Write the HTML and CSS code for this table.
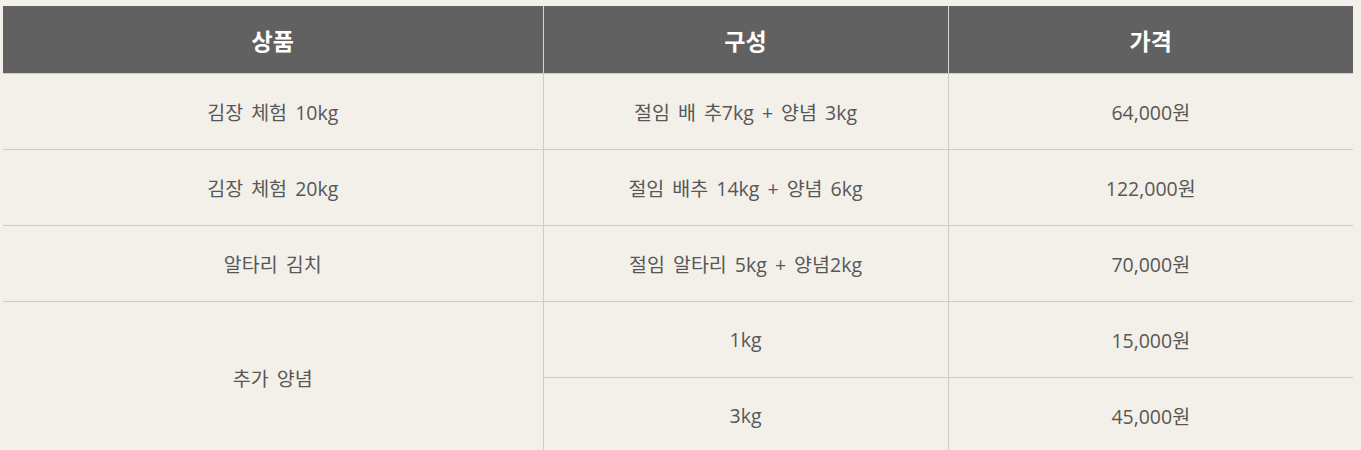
FILE: index.html
```html
<!DOCTYPE html>
<html lang="ko">
<head>
<meta charset="utf-8">
<link rel="stylesheet" href="styles.css">
</head>
<body>
<div class="wrap">
<table class="price">
  <colgroup><col class="c1"><col class="c2"><col class="c3"></colgroup>
  <thead>
    <tr><th>상품</th><th>구성</th><th>가격</th></tr>
  </thead>
  <tbody>
    <tr><td>김장 체험 10kg</td><td>절임 배 추7kg + 양념 3kg</td><td>64,000원</td></tr>
    <tr><td>김장 체험 20kg</td><td>절임 배추 14kg + 양념 6kg</td><td>122,000원</td></tr>
    <tr><td>알타리 김치</td><td>절임 알타리 5kg + 양념2kg</td><td>70,000원</td></tr>
    <tr><td rowspan="2">추가 양념</td><td class="sep">1kg</td><td>15,000원</td></tr>
    <tr><td class="sep">3kg</td><td>45,000원</td></tr>
  </tbody>
</table>
</div>
</body>
</html>
```
FILE: styles.css
```css
html, body {
  margin: 0;
  padding: 0;
  background: #f3f0ea;
}
.wrap {
  padding: 6px 8px 0 3px;
}
.price {
  width: 1350px;
  border-collapse: collapse;
  table-layout: fixed;
  font-family: "Open Sans", "Noto Sans CJK KR", sans-serif;
  color: #575757;
}
.c1 { width: 540px; }
.c2 { width: 405px; }
.c3 { width: 405px; }
.price th {
  background: #616161;
  color: #ffffff;
  font-size: 23px;
  font-weight: 700;
  height: 67px;
  padding: 0;
  text-align: center;
  vertical-align: middle;
  border-bottom: 1px solid #cfcbc6;
}
.price th + th {
  border-left: 1px solid #d6d6d6;
}
.price td {
  height: 75px;
  padding: 0;
  font-size: 19.5px;
  word-spacing: 3px;
  text-align: center;
  vertical-align: middle;
  border-bottom: 1px solid #cfcbc6;
}
.price td + td,
.price td.sep {
  border-left: 1px solid #cfcbc6;
}
```
